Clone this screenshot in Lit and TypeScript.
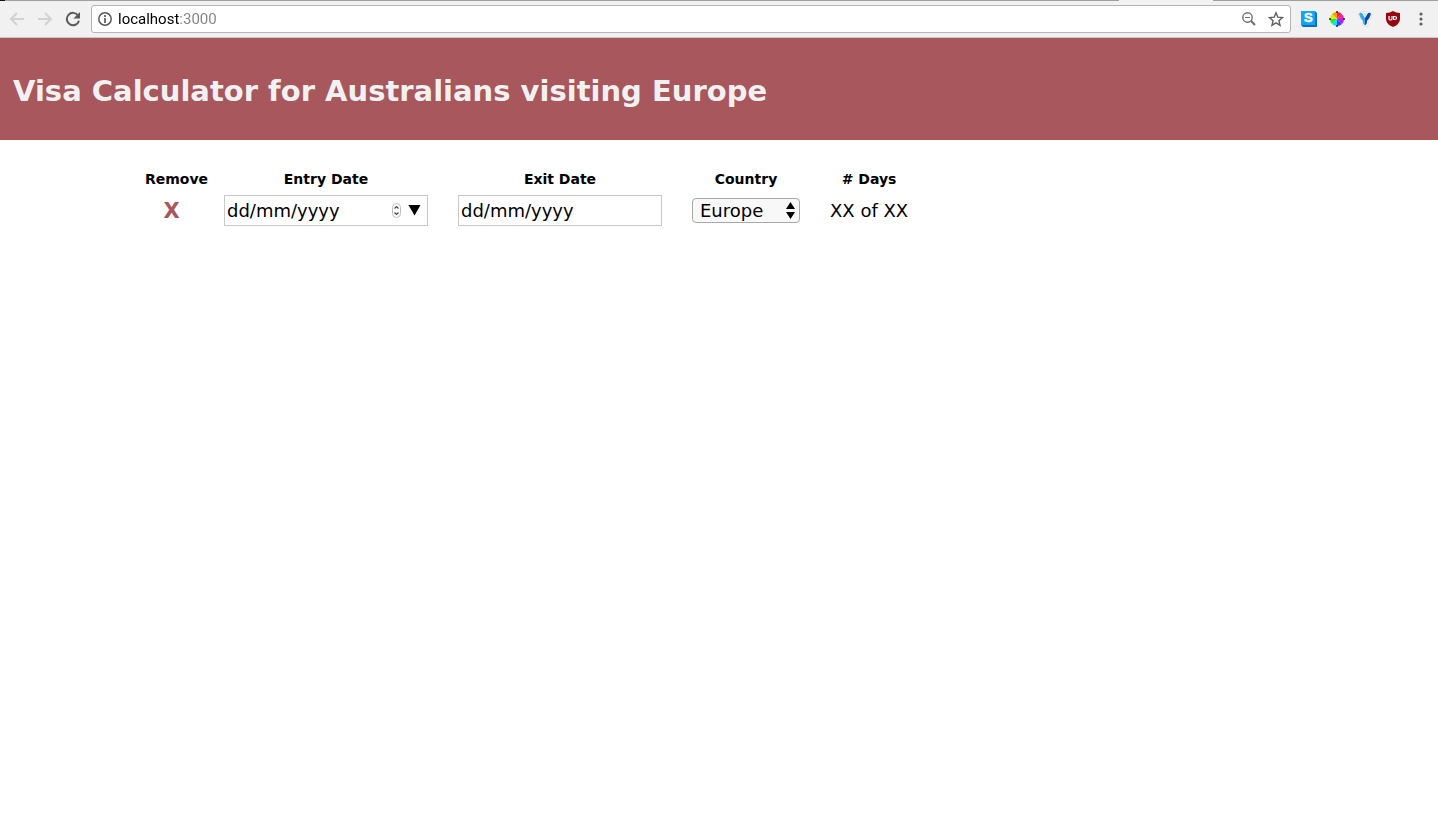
import { LitElement, html, css, svg } from "lit";
import { customElement } from "lit/decorators.js";

const backIcon = svg`<path d="M15 8H2M8 2L2 8l6 6" fill="none" stroke="currentColor" stroke-width="2"/>`;
const forwardIcon = svg`<path d="M1 8h13M8 2l6 6-6 6" fill="none" stroke="currentColor" stroke-width="2"/>`;
const reloadIcon = svg`<path d="M13.2 4.6A6.2 6.2 0 1 0 14 9.8" fill="none" stroke="currentColor" stroke-width="2"/><path d="M15 1v6.6H8.4z" fill="currentColor"/>`;

@customElement("browser-bar")
export class BrowserBar extends LitElement {
  static styles = css`
    :host {
      display: block;
      font-family: Roboto, sans-serif;
    }
    .edge {
      display: grid;
      grid-template-columns: 5px 1fr 94px 225px;
      height: 1px;
      background: #f1f1f1;
    }
    .corner {
      background: #15101d;
    }
    .line {
      background: #a09e9f;
    }
    .line.last {
      grid-column: 4;
    }
    .bar {
      display: flex;
      align-items: center;
      height: 36px;
      padding: 0 9px;
      background: #f1f1f1;
      border-bottom: 1px solid #c8c6c6;
    }
    button {
      display: flex;
      padding: 0;
      border: 0;
      background: none;
      color: #5a5a5a;
    }
    svg {
      display: block;
    }
    .nav {
      display: flex;
      gap: 12px;
      margin-right: 10px;
    }
    .nav .off {
      color: #d2d2d2;
    }
    .address {
      display: flex;
      flex: 1;
      align-items: center;
      box-sizing: border-box;
      height: 28px;
      padding: 0 6px;
      background: #fff;
      border: 1px solid #b5b5b5;
      border-radius: 3px;
    }
    .address input {
      flex: 1;
      min-width: 0;
      margin: 0;
      padding: 0 0 0 6px;
      border: 0;
      outline: 0;
      font: 15px/20px Roboto, sans-serif;
      color: transparent;
      caret-color: #000;
      background: linear-gradient(90deg, #000 67px, #808080 67px);
      -webkit-background-clip: text;
      background-clip: text;
    }
    .tools {
      display: flex;
      gap: 11px;
    }
    .extensions {
      display: flex;
      gap: 12px;
      margin-left: 10px;
    }
    .mark {
      font: bold 13px "Liberation Sans", sans-serif;
    }
  `;

  render() {
    return html`
      <div class="edge"><span class="corner"></span><span class="line"></span><span class="line last"></span></div>
      <div class="bar">
        <div class="nav">
          <button class="off" aria-label="Back" disabled><svg width="16" height="16">${backIcon}</svg></button>
          <button class="off" aria-label="Forward" disabled><svg width="16" height="16">${forwardIcon}</svg></button>
          <button aria-label="Reload"><svg width="16" height="16">${reloadIcon}</svg></button>
        </div>
        <div class="address">
          <button aria-label="Site information">
            <svg width="14" height="14">
              <circle cx="7" cy="7" r="6.2" fill="none" stroke="currentColor" stroke-width="1.5" />
              <path d="M7 6v5M7 3v2" stroke="currentColor" stroke-width="1.7" />
            </svg>
          </button>
          <input type="text" aria-label="Address" value="localhost:3000" spellcheck="false" />
          <div class="tools">
            <button aria-label="Zoom out">
              <svg width="16" height="16">
                <circle cx="6.5" cy="6.5" r="4.7" fill="none" stroke="#6e6e6e" stroke-width="1.4" />
                <path d="M4 6.5h5" stroke="#6e6e6e" />
                <path d="M10 10l4 4" stroke="#6e6e6e" stroke-width="2" />
              </svg>
            </button>
            <button aria-label="Bookmark this page">
              <svg width="16" height="16">
                <path d="M8 1.8l1.8 4.4 4.7.4-3.6 3.1 1.1 4.6L8 11.8l-4 2.5 1.1-4.6L1.5 6.6l4.7-.4z" fill="none" stroke="#606060" stroke-width="1.4" />
              </svg>
            </button>
          </div>
        </div>
        <div class="extensions">
          <button aria-label="S extension">
            <svg width="16" height="16">
              <path d="M0 0h14l2 2v14H2l-2-2z" fill="#0873b9" />
              <path d="M0 0h14v14H0z" fill="#11a5f5" />
              <text class="mark" x="3" y="11" fill="#fff" stroke="#fff" stroke-width=".5">S</text>
            </svg>
          </button>
          <button aria-label="Colour picker">
            <svg width="16" height="16">
              <path d="M8 8V1q2.500 0 4 1.200z" fill="#f22" />
              <path d="M8 8l4-5.800Q14.800 4 15 8z" fill="#f0269c" />
              <path d="M8 8h7q0 3-2 5z" fill="#b31cff" />
              <path d="M8 8l5 5q-2 2-5 2z" fill="#3340ff" />
              <path d="M8 8v7q-3 0-5-2z" fill="#12d9ff" />
              <path d="M8 8l-5 5Q1 11 1 8z" fill="#18ee42" />
              <path d="M8 8H1q0-3 2-5z" fill="#d8ef00" />
              <path d="M8 8L3 3q2-2 5-2z" fill="#ff9b00" />
              <path d="M8 0v2M8 14v2M0 8h2M14 8h2" stroke="#222" stroke-width="1.5" />
            </svg>
          </button>
          <button aria-label="Y extension">
            <svg width="16" height="16">
              <path d="M3 1h10q2 0 2 2 0 3-4 7v5H6v-5Q1 6 1 3q0-2 2-2z" fill="#fff" stroke="#dce4e8" />
              <path d="M2 3q1-2 3-1l3 5v7q-2 0-2-4Q3 7 2 3z" fill="#38a9e8" />
              <path d="M14 3q-1-2-3-1L8 7v7q2 0 2-4 3-3 4-7z" fill="#124b93" />
              <path d="M5.500 2h5L8 6z" fill="#c9e9fb" />
            </svg>
          </button>
          <button aria-label="Ad blocker">
            <svg width="16" height="16">
              <path d="M8 0q3 2 7 2v6q0 5-7 8-7-3-7-8V2q4 0 7-2z" fill="#960610" />
              <path d="M4 5v3q0 1 1.500 1T7 8V5M8.6 5.500v3h1q2 0 2-1.500t-2-1.500z" fill="none" stroke="#fff" stroke-width="1.2" />
            </svg>
          </button>
          <button aria-label="Menu">
            <svg width="16" height="16" fill="#606060">
              <circle cx="8" cy="3" r="1.6" /><circle cx="8" cy="8" r="1.6" /><circle cx="8" cy="13" r="1.6" />
            </svg>
          </button>
        </div>
      </div>
    `;
  }
}

@customElement("app-root")
export class AppRoot extends LitElement {
  static styles = css`
    :host {
      display: block;
      min-height: 100vh;
      background: #fff;
      color: #000;
      font-family: Verdana, "DejaVu Sans", sans-serif;
    }
    .banner {
      padding: 34px 13px 30px;
      background: #a8575c;
      color: #f1f1f1;
    }
    h1 {
      margin: 0;
      font-size: 29px;
      line-height: 38px;
    }
    table {
      margin: 28px 0 0 144px;
      border-collapse: collapse;
    }
    th,
    td {
      padding: 0 15px;
      text-align: center;
      white-space: nowrap;
    }
    th {
      height: 22px;
      padding-bottom: 5px;
      font-size: 14px;
      line-height: 22px;
    }
    td {
      font-size: 18px;
      line-height: 24px;
    }
    .remove {
      width: 65px;
      padding-left: 0;
      padding-right: 0;
    }
    td.remove {
      text-align: left;
    }
    .delete {
      display: block;
      width: 55px;
      padding: 0;
      border: 0;
      background: none;
      color: #a8575c;
      font: bold 21px/24px Verdana, "DejaVu Sans", sans-serif;
    }
    .date {
      display: flex;
      align-items: center;
      box-sizing: border-box;
      width: 204px;
      height: 31px;
      padding: 0 6px 0 2px;
      border: 1px solid #c8c8c8;
    }
    .date input {
      flex: 1;
      min-width: 0;
      margin: 0;
      padding: 0;
      border: 0;
      outline: 0;
      background: none;
      color: #000;
      font: 18px/24px Verdana, "DejaVu Sans", sans-serif;
    }
    .date input::placeholder {
      color: #000;
      opacity: 1;
    }
    .date button {
      display: flex;
      padding: 0;
      border: 0;
      background: none;
    }
    .date .open {
      margin-left: 7px;
    }
    .country {
      display: grid;
      align-items: center;
      width: 108px;
    }
    .country select {
      grid-area: 1 / 1;
      height: 25px;
      margin: 0;
      padding: 0 7px;
      border: 1px solid #a8a8a8;
      border-radius: 4px;
      appearance: none;
      background: #f8f8f8;
      color: #000;
      font: 18px/23px Verdana, "DejaVu Sans", sans-serif;
    }
    .country svg {
      grid-area: 1 / 1;
      justify-self: end;
      margin-right: 5px;
      pointer-events: none;
    }
  `;

  render() {
    return html`
      <browser-bar></browser-bar>
      <header class="banner"><h1>Visa Calculator for Australians visiting Europe</h1></header>
      <main>
        <table>
          <thead>
            <tr>
              <th class="remove">Remove</th>
              <th>Entry Date</th>
              <th>Exit Date</th>
              <th>Country</th>
              <th># Days</th>
            </tr>
          </thead>
          <tbody>
            <tr>
              <td class="remove"><button class="delete" aria-label="Remove trip">X</button></td>
              <td>
                <div class="date">
                  <input type="text" aria-label="Entry Date" placeholder="dd/mm/yyyy" />
                  <button aria-label="Step date">
                    <svg width="9" height="15">
                      <rect x=".5" y=".5" width="8" height="14" rx="4" fill="#fff" stroke="#bdbdbd" />
                      <path d="M2.5 5.5l2-2 2 2M2.5 9.5l2 2 2-2" fill="none" stroke="#444" stroke-width="1.2" />
                    </svg>
                  </button>
                  <button class="open" aria-label="Open calendar">
                    <svg width="13" height="11"><path d="M.5 0h12l-6 10.5z" /></svg>
                  </button>
                </div>
              </td>
              <td>
                <div class="date"><input type="text" aria-label="Exit Date" placeholder="dd/mm/yyyy" /></div>
              </td>
              <td>
                <div class="country">
                  <select aria-label="Country"><option>Europe</option></select>
                  <svg width="9" height="17"><path d="M4.5 0L9 7H0zM4.5 17L9 10H0z" /></svg>
                </div>
              </td>
              <td>XX of XX</td>
            </tr>
          </tbody>
        </table>
      </main>
    `;
  }
}
